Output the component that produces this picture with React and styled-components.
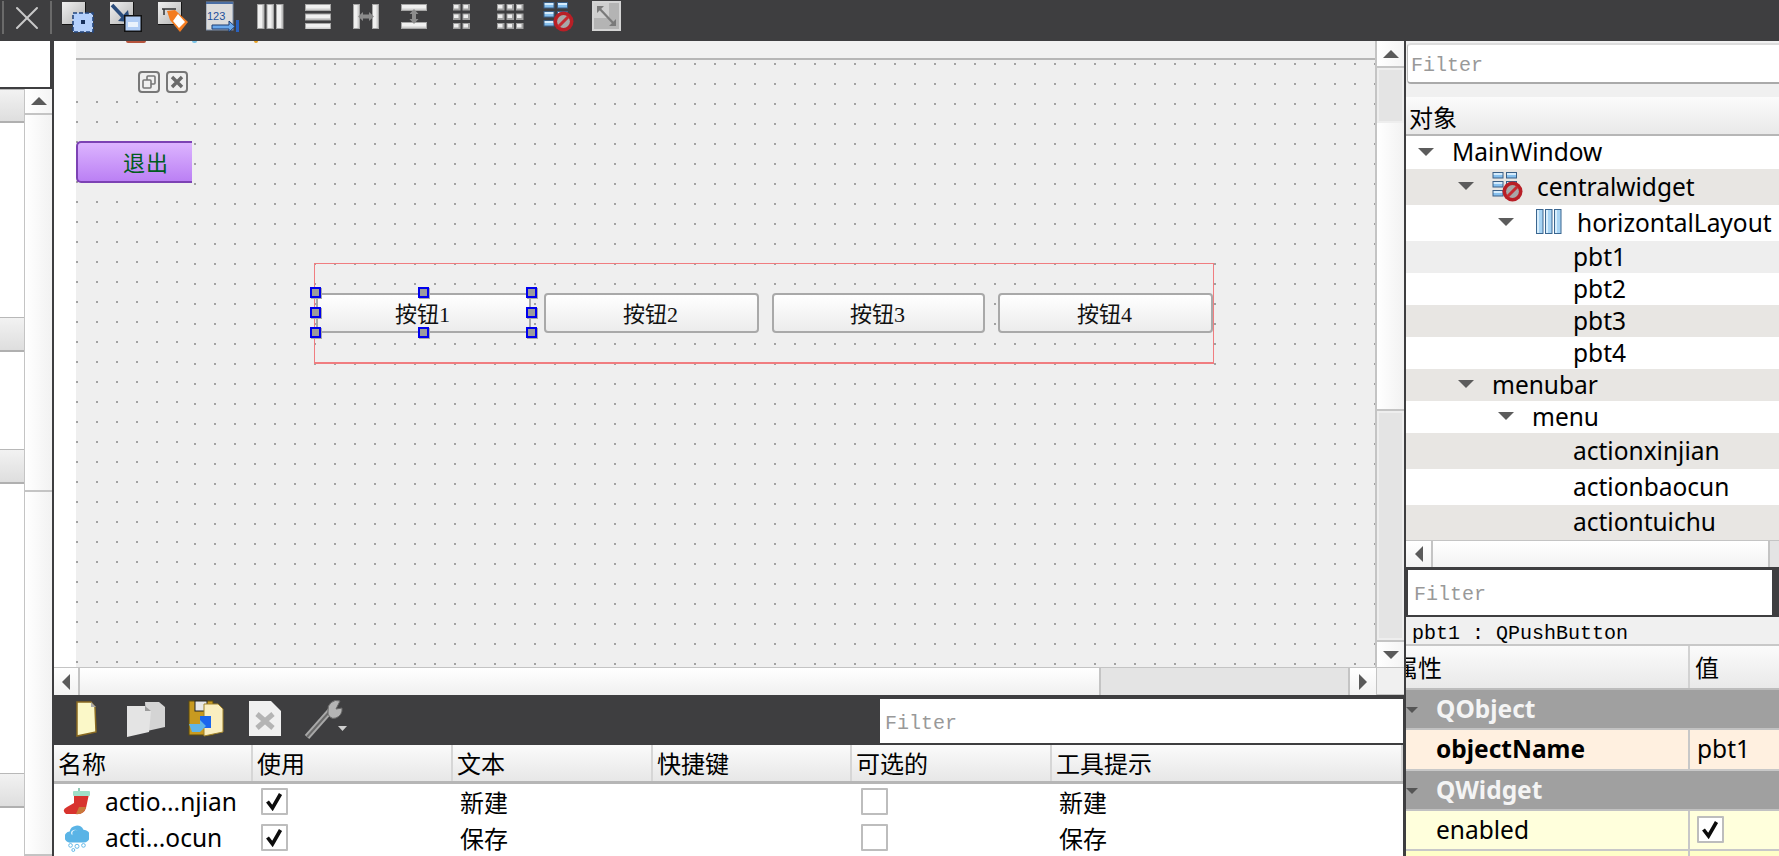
import React from "react";
import styled, { createGlobalStyle } from "styled-components";
import { X } from "lucide-react";

const sans = `"Noto Sans", "Open Sans", "Noto Sans CJK SC", sans-serif`;
const cjk = `"Noto Sans CJK SC", "Noto Sans", sans-serif`;
const serif = `"Liberation Serif", "Noto Sans CJK SC", serif`;
const mono = `"Liberation Mono", "Noto Sans CJK SC", monospace`;

const Global = createGlobalStyle`
  html, body { margin: 0; padding: 0; height: 100%; overflow: hidden; background: #3e3e40; }
  * { box-sizing: border-box; }
`;

const Screen = styled.div`
  width: 1779px;
  height: 856px;
  display: flex;
  flex-direction: column;
  overflow: hidden;
  background: #3e3e40;
  font-family: ${sans};
  color: #000;
`;

const TopBar = styled.div`
  height: 41px;
  flex: none;
  position: relative;
  display: flex;
  align-items: flex-start;
  background: #3e3e40;
`;
const TopIcon = styled.div`
  width: ${(p) => p.$w}px;
  height: 32px;
  margin-left: ${(p) => p.$ml}px;
  margin-top: 1px;
  flex: none;
  svg { display: block; }
`;
const Divider = styled.div`
  width: 2px;
  height: 33px;
  margin: 1px 0 0 ${(p) => p.$ml}px;
  background: #6a6a6a;
  flex: none;
`;
const CloseBtn = styled.div`
  width: 40px;
  height: 40px;
  margin: -2px 0 0 3px;
  flex: none;
  color: #c9c9c9;
  svg { display: block; }
`;

const Body = styled.div`
  flex: 1;
  display: flex;
  min-height: 0;
`;

/* left dock */
const LeftDock = styled.div`
  width: 52px;
  flex: none;
  display: flex;
  flex-direction: column;
  background: #3e3e40;
`;
const LeftTop = styled.div`
  height: 46px;
  width: 50px;
  background: #fff;
  flex: none;
`;
const LeftList = styled.div`
  margin-top: 2px;
  flex: 1;
  display: flex;
  background: #fff;
`;
const ListCol = styled.div`
  width: 24px;
  display: flex;
  flex-direction: column;
  background: #fff;
`;
const ListHead = styled.div`
  height: ${(p) => p.$h}px;
  margin-top: ${(p) => p.$mt}px;
  flex: none;
  background: linear-gradient(#f2f2f2, #dedede);
  border-top: 1px solid #b8b8b8;
  border-bottom: 2px solid #b0b0b0;
`;
const VBar = styled.div`
  width: 28px;
  flex: none;
  display: flex;
  flex-direction: column;
  border-left: 1px solid #c4c4c4;
  background: #e4e4e4;
`;
const ArrowCell = styled.div`
  height: ${(p) => p.$h || 26}px;
  flex: none;
  display: flex;
  align-items: center;
  justify-content: center;
  background: linear-gradient(90deg, #fff, #f4f4f4);
  ${(p) => (p.$top ? "border-bottom: 2px solid #c4c4c4;" : "border-top: 2px solid #c4c4c4;")}
`;
const Tri = styled.div`
  width: 0;
  height: 0;
  border-style: solid;
  border-color: transparent;
  ${(p) =>
    p.$dir === "up"
      ? `border-width: 0 8px 8px 8px; border-bottom-color: #5a5a5a;`
      : p.$dir === "down"
      ? `border-width: 8px 8px 0 8px; border-top-color: #5a5a5a;`
      : p.$dir === "left"
      ? `border-width: 8px 8px 8px 0; border-right-color: #5a5a5a;`
      : `border-width: 8px 0 8px 8px; border-left-color: #5a5a5a;`}
`;
const Track = styled.div`
  height: ${(p) => p.$h}px;
  flex: ${(p) => (p.$h ? "none" : 1)};
  background: ${(p) => (p.$thumb ? "#e4e4e4" : "linear-gradient(90deg, #fff, #f2f2f2)")};
  ${(p) => (p.$thumb ? "border: 2px solid #eee;" : "border-bottom: 2px solid #c4c4c4;")}
`;

/* centre */
const Centre = styled.div`
  width: 1352px;
  margin-left: 2px;
  flex: none;
  display: flex;
  flex-direction: column;
`;
const DesignRow = styled.div`
  height: 626px;
  flex: none;
  display: flex;
`;
const Gutter = styled.div`
  width: 22px;
  flex: none;
  background: #fff;
`;
const Form = styled.div`
  width: 1300px;
  flex: none;
  position: relative;
  display: flex;
  flex-direction: column;
  background: #efefef;
  border-right: 1px solid #c4c4c4;
  overflow: hidden;
`;
const MenuStrip = styled.div`
  height: 19px;
  flex: none;
  position: relative;
  background: #f1f1f1;
  border-bottom: 2px solid #b6b6b6;
`;
const MenuScrap = styled.div`
  position: absolute;
  top: 0;
  left: ${(p) => p.$x}px;
  width: ${(p) => p.$w}px;
  height: 2px;
  background: ${(p) => p.$c};
  border-radius: 0 0 4px 4px;
`;
const FormBody = styled.div`
  flex: 1;
  display: flex;
  min-height: 0;
`;
const FormLeft = styled.div`
  width: 118px;
  flex: none;
  display: flex;
  flex-direction: column;
`;
const TitleBtns = styled.div`
  height: 40px;
  flex: none;
  display: flex;
  gap: 6px;
  justify-content: flex-end;
  align-items: flex-start;
  padding: 11px 6px 0 0;
  svg { display: block; }
`;
const dots = (x, y) => `
  background-image: conic-gradient(from 270deg at 2px 2px, #a2a2a2 25%, transparent 0);
  background-size: 20px 20px;
  background-position: ${x}px ${y}px;
`;
const LeftDots = styled.div`
  flex: 1;
  ${dots(0, 1)}
  padding-top: 41px;
`;
const RightDots = styled.div`
  flex: 1;
  ${dots(0, 3)}
`;
const QuitButton = styled.div`
  width: 116px;
  height: 42px;
  display: flex;
  align-items: center;
  padding: 0 0 3px 45px;
  font-family: ${cjk};
  font-size: 22px;
  color: #005c20;
  letter-spacing: 1px;
  border: 2px solid #7c42b4;
  border-right: 0;
  border-radius: 5px 0 0 5px;
  background: linear-gradient(#dcb4ff, #bb80f4);
`;
const LayoutBox = styled.div`
  position: absolute;
  left: 238px;
  top: 222px;
  width: 900px;
  height: 101px;
  border: 1px solid #f07d80;
  border-bottom-width: 2px;
  display: flex;
  padding: 29px 0 0 1px;
  gap: 13px;
`;
const PushButton = styled.div`
  position: relative;
  width: ${(p) => p.$w}px;
  height: 40px;
  display: flex;
  align-items: center;
  justify-content: center;
  padding: 0 2px 3px 0;
  font-family: ${serif};
  font-size: 22px;
  color: #111;
  border: 2px solid #a9a9a9;
  border-radius: 4px;
  background: linear-gradient(#fff, #ececec);
`;
const Handle = styled.span`
  position: absolute;
  left: ${(p) => p.$x}px;
  top: ${(p) => p.$y}px;
  width: 11px;
  height: 11px;
  border: 2px solid #0000ee;
  background: #9c9c9c;
  box-shadow: 1px 1px 0 #a8a8a8;
`;
const HBar = styled.div`
  height: 28px;
  width: 1350px;
  flex: none;
  display: flex;
`;
const HArrow = styled.div`
  width: ${(p) => p.$w}px;
  flex: none;
  display: flex;
  align-items: center;
  justify-content: center;
  background: linear-gradient(#fff, #f2f2f2);
  border-top: 1px solid #c4c4c4;
  ${(p) => (p.$left ? "border-right: 2px solid #c4c4c4;" : "border-left: 2px solid #c4c4c4;")}
`;
const HTrack = styled.div`
  flex: ${(p) => (p.$w ? "none" : 1)};
  width: ${(p) => p.$w}px;
  background: ${(p) => (p.$thumb ? "#e4e4e4" : "linear-gradient(#fff, #f0f0f0)")};
  border-top: 1px solid #c4c4c4;
  ${(p) => (p.$thumb ? "border-left: 2px solid #c4c4c4;" : "")}
`;
const Corner = styled.div`
  width: 28px;
  flex: none;
  background: #f0f0f0;
  border: 1px solid #c4c4c4;
  border-right: 0;
`;

/* action editor */
const ActionBar = styled.div`
  height: 50px;
  width: 1349px;
  flex: none;
  display: flex;
  align-items: flex-start;
  background: #3e3e40;
  position: relative;
`;
const ActionIcon = styled.div`
  width: ${(p) => p.$w}px;
  margin: 4px 0 0 ${(p) => p.$ml}px;
  flex: none;
  svg { display: block; }
`;
const ActionFilter = styled.div`
  margin: 4px 0 0 auto;
  width: 523px;
  height: 44px;
  background: #fff;
  font-family: ${mono};
  font-size: 20px;
  color: #999;
  padding: 13px 0 0 5px;
  line-height: 24px;
`;
const ActionTable = styled.div`
  flex: 1;
  width: 1349px;
  background: #fff;
  display: flex;
  flex-direction: column;
`;
const TableHead = styled.div`
  height: 39px;
  flex: none;
  display: grid;
  grid-template-columns: 199px 200px 200px 199px 200px 1fr;
  background: linear-gradient(#fbfbfb, #e7e7e7);
  border-bottom: 3px solid #b6b6b6;
`;
const HeadCell = styled.div`
  display: flex;
  align-items: center;
  padding-left: 4px;
  font-family: ${cjk};
  font-size: 24px;
  line-height: 1;
  border-right: 2px solid #d6d6d6;
  white-space: nowrap;
`;
const TableRow = styled.div`
  height: 36px;
  flex: none;
  display: grid;
  grid-template-columns: 199px 200px 200px 199px 200px 1fr;
`;
const TableCell = styled.div`
  display: flex;
  align-items: center;
  padding: 0 0 1px ${(p) => (p.$pad === undefined ? 7 : p.$pad)}px;
  font-size: ${(p) => (p.$cjk ? 24 : 24.5)}px;
  font-family: ${(p) => (p.$cjk ? cjk : sans)};
  white-space: nowrap;
  svg { display: block; flex: none; }
`;
const ActionIconSlot = styled.span`
  width: 28px;
  height: 30px;
  margin-right: 14px;
  flex: none;
  display: flex;
  align-items: center;
  justify-content: center;
`;
const Check = styled.span`
  width: 27px;
  height: 27px;
  flex: none;
  display: flex;
  align-items: center;
  justify-content: center;
  background: #fff;
  border: 2px solid #bdbdbd;
  border-radius: 1px;
  svg { display: block; }
`;

/* right docks */
const RightDock = styled.div`
  flex: 1;
  display: flex;
  flex-direction: column;
  min-width: 0;
`;
const ObjectFilterWrap = styled.div`
  height: 56px;
  flex: none;
  padding: 2px 0 13px 1px;
  background: #f0f0f0;
`;
const ObjectFilter = styled.div`
  height: 41px;
  background: #fff;
  border: 2px solid #dcdcdc;
  border-bottom: 2px solid #aaa;
  border-left: 1px solid #bbb;
  border-right: 0;
  border-radius: 4px 0 0 4px;
  font-family: ${mono};
  font-size: 20px;
  line-height: 24px;
  color: #999;
  padding: 9px 0 0 3px;
`;
const TreeHead = styled.div`
  height: 39px;
  flex: none;
  display: flex;
  align-items: center;
  padding: 2px 0 0 3px;
  font-family: ${cjk};
  font-size: 24px;
  background: linear-gradient(#fbfbfb, #e9e9e9);
  border-bottom: 2px solid #b6b6b6;
`;
const TreeBody = styled.div`
  height: 404px;
  flex: none;
  display: flex;
  flex-direction: column;
  background: #fff;
`;
const TreeRow = styled.div`
  height: ${(p) => p.$h}px;
  flex: none;
  display: flex;
  align-items: center;
  padding: 0 0 2px ${(p) => p.$indent}px;
  font-size: 24.5px;
  background: ${(p) => p.$bg || "#fff"};
  white-space: nowrap;
  overflow: hidden;
  svg { display: block; flex: none; }
`;
const Caret = styled.span`
  width: 0;
  height: 0;
  margin-right: 18px;
  flex: none;
  border-style: solid;
  border-color: #5c5c5c transparent transparent transparent;
  border-width: 8px 8px 0 8px;
`;
const RowIcon = styled.span`
  margin: 0 ${(p) => p.$mr}px 0 ${(p) => p.$ml || 0}px;
  flex: none;
`;
const TreeScroll = styled.div`
  height: 27px;
  flex: none;
  display: flex;
  background: linear-gradient(#fff, #f2f2f2);
  border-top: 1px solid #c4c4c4;
`;
const TreeScrollLeft = styled.div`
  width: 27px;
  flex: none;
  display: flex;
  align-items: center;
  justify-content: center;
  border-right: 2px solid #c4c4c4;
`;
const TreeScrollThumb = styled.div`
  margin-left: auto;
  width: 11px;
  background: #e4e4e4;
  border-left: 2px solid #c4c4c4;
`;
const PropFilterWrap = styled.div`
  height: 50px;
  flex: none;
  padding: 3px 7px 2px 2px;
  background: #3e3e40;
`;
const PropFilter = styled.div`
  height: 100%;
  background: #fff;
  font-family: ${mono};
  font-size: 20px;
  line-height: 24px;
  color: #999;
  padding: 13px 0 0 6px;
`;
const ClassLine = styled.div`
  height: 29px;
  flex: none;
  background: #f0f0f0;
  border-bottom: 2px solid #c8c8c8;
  font-family: ${mono};
  font-size: 20px;
  line-height: 33px;
  padding-left: 6px;
  white-space: nowrap;
  overflow: hidden;
`;
const PropHead = styled.div`
  height: 44px;
  flex: none;
  display: grid;
  grid-template-columns: 284px 1fr;
  background: linear-gradient(#fbfbfb, #e9e9e9);
  border-bottom: 2px solid #bcbcbc;
  overflow: hidden;
`;
const PropHeadCell = styled.div`
  font-family: ${cjk};
  font-size: 24px;
  line-height: 42px;
  overflow: hidden;
  white-space: nowrap;
  text-indent: ${(p) => p.$indent}px;
  border-right: ${(p) => (p.$last ? "0" : "2px solid #d2d2d2")};
`;
const GroupRow = styled.div`
  height: ${(p) => p.$h}px;
  flex: none;
  display: flex;
  align-items: center;
  background: #a0a0a0;
  border-bottom: 2px solid #c2c2c2;
  color: #f4f4f4;
  font-size: 24.5px;
  font-weight: 700;
  position: relative;
  padding: 0 0 2px 30px;
`;
const GroupCaret = styled.span`
  position: absolute;
  left: 0;
  top: 17px;
  width: 0;
  height: 0;
  border-style: solid;
  border-color: #555 transparent transparent transparent;
  border-width: 6px 6px 0 6px;
`;
const PropRow = styled.div`
  height: ${(p) => p.$h}px;
  flex: none;
  display: grid;
  grid-template-columns: 284px 1fr;
  background: ${(p) => p.$bg};
  border-bottom: 2px solid #c8c8c8;
  font-size: 24.5px;
`;
const PropName = styled.div`
  display: flex;
  align-items: center;
  padding: 0 0 2px 30px;
  border-right: 2px solid #c8c8c8;
  font-weight: ${(p) => (p.$bold ? 700 : 400)};
`;
const PropValue = styled.div`
  display: flex;
  align-items: center;
  padding: 0 0 2px 7px;
`;

const tick = (
  <svg width="19" height="19" viewBox="0 0 19 19">
    <path d="M2.5 9.5 L7.5 16 L15.5 2" fill="none" stroke="#0c0c0c" strokeWidth="3.6" />
  </svg>
);

const BevelV = ({ x, y, w, h }) => (
  <g>
    <rect x={x} y={y} width={w} height={h} fill="#a6a6a6" />
    <rect x={x + 1} y={y + 1} width={w - 3} height={h - 2} fill="#f0f0f0" />
    <rect x={x + w - 2.5} y={y + 1} width={1.5} height={h - 2} fill="#d0d0d0" />
  </g>
);
const BevelH = ({ x, y, w, h }) => (
  <g>
    <rect x={x} y={y} width={w} height={h} fill="#a6a6a6" />
    <rect x={x + 1} y={y + 1} width={w - 2} height={h - 3} fill="#f0f0f0" />
    <rect x={x + 1} y={y + h - 2.5} width={w - 2} height={1.5} fill="#d0d0d0" />
  </g>
);
const BarsV = () => (
  <svg width="27" height="28" viewBox="0 0 27 28">
    {[0, 9.5, 19].map((x) => (
      <BevelV key={x} x={x} y={3} w={7.5} h={25} />
    ))}
  </svg>
);
const BarsH = () => (
  <svg width="27" height="28" viewBox="0 0 27 28">
    {[3, 12.5, 22].map((y) => (
      <BevelH key={y} x={0} y={y} w={26} h={7} />
    ))}
  </svg>
);
const SplitH = () => (
  <svg width="27" height="28" viewBox="0 0 27 28">
    <BevelV x={0} y={3} w={7} h={25} />
    <BevelV x={19} y={3} w={7} h={25} />
    <path d="M5 15.5 L10 11 V13.5 H16 V11 L21 15.5 L16 20 V17.5 H10 V20 Z" fill="#8c8c8c" />
  </svg>
);
const SplitV = () => (
  <svg width="27" height="28" viewBox="0 0 27 28">
    <BevelH x={0} y={3} w={26} h={7} />
    <BevelH x={0} y={21} w={26} h={7} />
    <path d="M13 8 L17.5 13 H15 V18 H17.5 L13 23 L8.5 18 H11 V13 H8.5 Z" fill="#8c8c8c" />
  </svg>
);
const Grid = ({ cols, width }) => (
  <svg width={width} height="28" viewBox={`0 0 ${width} 28`}>
    {[3, 12.5, 22].map((y) =>
      Array.from({ length: cols }).map((_, i) => (
        <g key={`${y}-${i}`}>
          <rect x={i * 9.5} y={y} width="7.5" height="6.5" fill="#a0a0a0" />
          <rect x={i * 9.5 + 1} y={y + 1} width="4.5" height="3.5" fill="#eeeeee" />
        </g>
      ))
    )}
  </svg>
);
const NoLayout = () => (
  <svg width="31" height="31" viewBox="0 0 31 31">
    {[1, 10, 19].map((y) => (
      <g key={y}>
        <rect x="0.5" y={y} width="11" height="6.5" fill="#3a5f86" />
        <rect x="1.5" y={y + 1} width="9" height="2" fill="#d6ecfc" />
        <rect x="1.5" y={y + 3} width="9" height="2.5" fill="#86c0ee" />
        {y < 19 && (
          <g>
            <rect x="14" y={y} width="11" height="6.5" fill="#3a5f86" />
            <rect x="15" y={y + 1} width="9" height="2" fill="#d6ecfc" />
            <rect x="15" y={y + 3} width="9" height="2.5" fill="#86c0ee" />
          </g>
        )}
      </g>
    ))}
    <circle cx="20.5" cy="20.5" r="10" fill="#b81f26" />
    <circle cx="20.5" cy="20.5" r="6.4" fill="#a8a8a8" />
    <path d="M15.5 25.5 L25.5 15.5" stroke="#c62a30" strokeWidth="3" />
  </svg>
);
const HLayout = () => (
  <svg width="28" height="30" viewBox="0 0 28 30">
    {[1, 10, 19].map((x) => (
      <g key={x}>
        <rect x={x} y="2" width="7.5" height="25" fill="#3a6690" />
        <rect x={x + 1} y="3" width="5.5" height="23" fill="#a8d4f4" />
        <rect x={x + 1} y="3" width="2" height="23" fill="#d8eefc" />
      </g>
    ))}
  </svg>
);

const EditWidgets = () => (
  <svg width="33" height="32" viewBox="0 0 33 32">
    <defs>
      <linearGradient id="winA" x1="0" y1="0" x2="1" y2="1">
        <stop offset="0" stopColor="#f0f0f0" />
        <stop offset="1" stopColor="#b4b4b4" />
      </linearGradient>
    </defs>
    <rect x="0" y="1" width="24" height="23" fill="#151515" />
    <rect x="0" y="1" width="23" height="22" fill="url(#winA)" />
    <rect x="11" y="12" width="20" height="19" fill="#b4d0fc" stroke="#23457c" strokeWidth="1.6" strokeDasharray="4 2" />
    <rect x="19" y="19" width="4" height="4" fill="#16305c" />
  </svg>
);
const EditSignals = () => (
  <svg width="33" height="32" viewBox="0 0 33 32">
    <rect x="0" y="1" width="24" height="23" fill="#151515" />
    <rect x="0" y="1" width="23" height="22" fill="url(#winA)" />
    <path d="M2 4 L16 19" stroke="#2a4c7c" strokeWidth="3.6" />
    <path d="M8 20 L20 21 L18 9 Z" fill="#2a4c7c" />
    <rect x="14" y="14" width="18" height="17" fill="#111" />
    <rect x="15.5" y="15.5" width="15" height="14" fill="#b0ccf4" />
    <rect x="18" y="21" width="10" height="5" fill="#eaf2fc" />
  </svg>
);
const EditBuddy = () => (
  <svg width="31" height="32" viewBox="0 0 31 32">
    <rect x="0" y="1" width="24" height="23" fill="#151515" />
    <rect x="0" y="1" width="23" height="22" fill="url(#winA)" />
    <path d="M4 8 H18 M6 8 V14" stroke="#333" strokeWidth="1.5" />
    <path d="M9 10 L17 9 L30 21 L22 31 L12 19 Z" fill="#f47c20" />
    <path d="M20 13 L27 21 L21 27 L15 20 Z" fill="#fff" />
  </svg>
);
const EditTab = () => (
  <svg width="33" height="32" viewBox="0 0 33 32">
    <rect x="0" y="1" width="27" height="28" fill="#dcdcdc" stroke="#7c8ea8" />
    <rect x="0" y="1" width="27" height="2" fill="#4a6ea4" />
    <text x="1" y="19" fontFamily="Liberation Sans, sans-serif" fontSize="11" fill="#1d4f9a">123</text>
    <path d="M6 24 H23 V20 L29 25.5 L23 31 V28 H6 Z" fill="#6aa8ec" stroke="#1d3c72" />
    <rect x="30" y="19" width="3" height="12" fill="#2a62c0" />
  </svg>
);
const AdjustSize = () => (
  <svg width="29" height="30" viewBox="0 0 29 30">
    <rect x="1" y="1" width="27" height="28" fill="#b4b4b4" stroke="#d4d4d4" strokeWidth="2" />
    <rect x="2" y="2" width="15" height="15" fill="#cfcfcf" />
    <path d="M6 6 L23 24" stroke="#7a7a7a" strokeWidth="2.2" />
    <path d="M5 5 H12 L5 12 Z M24 25 H17 L24 18 Z" fill="#7a7a7a" />
  </svg>
);
const Restore = () => (
  <svg width="22" height="22" viewBox="0 0 22 22">
    <rect x="1" y="1" width="20" height="20" rx="3" fill="none" stroke="#777" strokeWidth="2" />
    <rect x="9" y="5" width="8" height="8" rx="1" fill="none" stroke="#777" strokeWidth="1.6" />
    <rect x="5" y="9" width="8" height="8" rx="1" fill="#efefef" stroke="#777" strokeWidth="1.6" />
  </svg>
);
const CloseSmall = () => (
  <svg width="22" height="22" viewBox="0 0 22 22">
    <rect x="1" y="1" width="20" height="20" rx="3" fill="none" stroke="#777" strokeWidth="2" />
    <path d="M6 6 L16 16 M16 6 L6 16" stroke="#6a6a6a" strokeWidth="3.4" />
  </svg>
);

const FileNew = () => (
  <svg width="24" height="38" viewBox="0 0 24 38">
    <path d="M3 3 H17 L21 8 L22 33 L3 37 Z" fill="#fbf8c8" stroke="#8a6a20" strokeWidth="1.5" />
    <path d="M17 3 V8 H22 Z" fill="#aaa" />
  </svg>
);
const FileCopy = () => (
  <svg width="42" height="38" viewBox="0 0 42 38">
    <path d="M20 3 H34 L40 8 V28 L22 32 Z" fill="#d4d4d4" />
    <path d="M2 7 H20 L26 12 L24 33 L2 38 Z" fill="#e4e4e4" />
    <path d="M20 7 V12 H26 Z" fill="#9a9a9a" />
  </svg>
);
const FilePaste = () => (
  <svg width="36" height="38" viewBox="0 0 36 38">
    <rect x="1" y="2" width="24" height="34" fill="#c89a20" stroke="#5a4a10" />
    <rect x="7" y="2" width="12" height="10" fill="#e8e8e8" stroke="#222" />
    <path d="M16 5 H30 L35 10 V33 L16 37 Z" fill="#faeec0" stroke="#a0822a" />
    <rect x="12" y="17" width="11" height="12" fill="#1a66ee" />
    <path d="M1 25 H12 V21 L18 27 L12 33 H4 Z" fill="#5fb4e8" />
  </svg>
);
const FileDelete = () => (
  <svg width="32" height="38" viewBox="0 0 32 38">
    <path d="M0 2 H22 L32 12 V37 H0 Z" fill="#f0f0f0" />
    <path d="M8 15 L24 29 M24 15 L8 29" stroke="#b4b4b4" strokeWidth="5" />
  </svg>
);
const Wrench = () => (
  <svg width="44" height="40" viewBox="0 0 44 40">
    <path d="M3 38 L26 12" stroke="#a8a8a8" strokeWidth="6" />
    <path d="M3 38 L26 12" stroke="#6a6a6a" strokeWidth="2" />
    <path d="M36 2 A9 9 0 0 0 24 12 A6 6 0 0 0 32 19 A9 9 0 0 0 38 9 L32 10 Z" fill="#b4b4b4" stroke="#666" />
    <path d="M34 27 H43 L38.5 32 Z" fill="#cfcfcf" />
  </svg>
);
const Sock = () => (
  <svg width="28" height="28" viewBox="0 0 28 28">
    <path d="M11 6 H26 L23 20 Q21 27 12 26 L3 26 Q-2 22 4 19 L11 15 Z" fill="#d8332e" />
    <rect x="10" y="3" width="17" height="5" rx="1" fill="#9fe0c8" />
    <path d="M13 26 Q21 27 23 19 L16 19 Z" fill="#c87a3a" />
    <path d="M16 3 V0" stroke="#6fb8a0" strokeWidth="1.5" />
  </svg>
);
const Cloud = () => (
  <svg width="24" height="30" viewBox="0 0 26 30">
    <path d="M6 20 A6 6 0 0 1 5 8 A8 8 0 0 1 20 6 A7 7 0 0 1 20 20 Z" fill="#5ab4e6" />
    <path d="M8 9 A4 4 0 0 1 14 7 A4 3 0 0 0 8 12 Z" fill="#e4f4fc" />
    <circle cx="6" cy="23" r="2" fill="#fff" stroke="#5ab4e6" />
    <circle cx="13" cy="24" r="2.2" fill="#fff" stroke="#5ab4e6" />
    <circle cx="20" cy="23" r="2" fill="#fff" stroke="#5ab4e6" />
    <circle cx="9" cy="28" r="1.6" fill="#fff" stroke="#5ab4e6" />
  </svg>
);

const handles = [
  [-8, -8], [100, -8], [208, -8],
  [-8, 12], [208, 12],
  [-8, 32], [100, 32], [208, 32],
];

const App = () => (
  <Screen>
    <Global />
    <TopBar>
      <Divider $ml={2} />
      <CloseBtn><X size={40} strokeWidth={1.2} /></CloseBtn>
      <Divider $ml={3} />
      <TopIcon $w={33} $ml={10}><EditWidgets /></TopIcon>
      <TopIcon $w={33} $ml={15}><EditSignals /></TopIcon>
      <TopIcon $w={31} $ml={15}><EditBuddy /></TopIcon>
      <TopIcon $w={33} $ml={17}><EditTab /></TopIcon>
      <TopIcon $w={27} $ml={18}><BarsV /></TopIcon>
      <TopIcon $w={27} $ml={21}><BarsH /></TopIcon>
      <TopIcon $w={27} $ml={21}><SplitH /></TopIcon>
      <TopIcon $w={27} $ml={21}><SplitV /></TopIcon>
      <TopIcon $w={17} $ml={25}><Grid cols={2} width={17} /></TopIcon>
      <TopIcon $w={27} $ml={27}><Grid cols={3} width={27} /></TopIcon>
      <TopIcon $w={31} $ml={19}><NoLayout /></TopIcon>
      <TopIcon $w={29} $ml={18}><AdjustSize /></TopIcon>
    </TopBar>
    <Body>
      <LeftDock>
        <LeftTop />
        <LeftList>
          <ListCol>
            <ListHead $h={34} $mt={0} />
            <ListHead $h={35} $mt={194} />
            <ListHead $h={35} $mt={97} />
            <ListHead $h={35} $mt={289} />
          </ListCol>
          <VBar>
            <ArrowCell $top><Tri $dir="up" /></ArrowCell>
            <Track $h={377} />
            <Track />
          </VBar>
        </LeftList>
      </LeftDock>
      <Centre>
        <DesignRow>
          <Gutter />
          <Form>
            <MenuStrip>
              <MenuScrap $x={50} $w={20} $c="#b5533c" />
              <MenuScrap $x={116} $w={5} $c="#79c4e8" />
              <MenuScrap $x={178} $w={4} $c="#e8a020" />
            </MenuStrip>
            <FormBody>
              <FormLeft>
                <TitleBtns>
                  <Restore />
                  <CloseSmall />
                </TitleBtns>
                <LeftDots>
                  <QuitButton>退出</QuitButton>
                </LeftDots>
              </FormLeft>
              <RightDots />
            </FormBody>
            <LayoutBox>
              <PushButton $w={215}>
                按钮1
                {handles.map(([x, y]) => (
                  <Handle key={`${x}-${y}`} $x={x} $y={y} />
                ))}
              </PushButton>
              <PushButton $w={215}>按钮2</PushButton>
              <PushButton $w={213}>按钮3</PushButton>
              <PushButton $w={215}>按钮4</PushButton>
            </LayoutBox>
          </Form>
          <VBar>
            <ArrowCell $top $h={27}><Tri $dir="up" /></ArrowCell>
            <Track $h={55} $thumb />
            <Track $h={288} />
            <Track $thumb />
            <ArrowCell $h={27}><Tri $dir="down" /></ArrowCell>
          </VBar>
        </DesignRow>
        <HBar>
          <HArrow $w={26} $left><Tri $dir="left" /></HArrow>
          <HTrack />
          <HTrack $w={249} $thumb />
          <HArrow $w={28}><Tri $dir="right" /></HArrow>
          <Corner />
        </HBar>
        <ActionBar>
          <ActionIcon $w={24} $ml={20}><FileNew /></ActionIcon>
          <ActionIcon $w={42} $ml={27}><FileCopy /></ActionIcon>
          <ActionIcon $w={36} $ml={21}><FilePaste /></ActionIcon>
          <ActionIcon $w={32} $ml={25}><FileDelete /></ActionIcon>
          <ActionIcon $w={44} $ml={23}><Wrench /></ActionIcon>
          <ActionFilter>Filter</ActionFilter>
        </ActionBar>
        <ActionTable>
          <TableHead>
            {["名称", "使用", "文本", "快捷键", "可选的", "工具提示"].map((t) => (
              <HeadCell key={t}>{t}</HeadCell>
            ))}
          </TableHead>
          <TableRow>
            <TableCell $pad={9}>
              <ActionIconSlot><Sock /></ActionIconSlot>
              actio...njian
            </TableCell>
            <TableCell $pad={8}><Check>{tick}</Check></TableCell>
            <TableCell $cjk>新建</TableCell>
            <TableCell />
            <TableCell $pad={9}><Check /></TableCell>
            <TableCell $cjk>新建</TableCell>
          </TableRow>
          <TableRow>
            <TableCell $pad={9}>
              <ActionIconSlot><Cloud /></ActionIconSlot>
              acti...ocun
            </TableCell>
            <TableCell $pad={8}><Check>{tick}</Check></TableCell>
            <TableCell $cjk>保存</TableCell>
            <TableCell />
            <TableCell $pad={9}><Check /></TableCell>
            <TableCell $cjk>保存</TableCell>
          </TableRow>
        </ActionTable>
      </Centre>
      <RightDock>
        <ObjectFilterWrap>
          <ObjectFilter>Filter</ObjectFilter>
        </ObjectFilterWrap>
        <TreeHead>对象</TreeHead>
        <TreeBody>
          <TreeRow $h={33} $indent={12}><Caret />MainWindow</TreeRow>
          <TreeRow $h={36} $indent={52} $bg="#e8e6e3">
            <Caret />
            <RowIcon $mr={14}><NoLayout /></RowIcon>
            centralwidget
          </TreeRow>
          <TreeRow $h={36} $indent={92}>
            <Caret />
            <RowIcon $ml={3} $mr={14}><HLayout /></RowIcon>
            horizontalLayout
          </TreeRow>
          <TreeRow $h={32} $indent={167} $bg="#eeeeee">pbt1</TreeRow>
          <TreeRow $h={32} $indent={167}>pbt2</TreeRow>
          <TreeRow $h={32} $indent={167} $bg="#e8e6e3">pbt3</TreeRow>
          <TreeRow $h={32} $indent={167}>pbt4</TreeRow>
          <TreeRow $h={32} $indent={52} $bg="#e8e6e3"><Caret />menubar</TreeRow>
          <TreeRow $h={32} $indent={92}><Caret />menu</TreeRow>
          <TreeRow $h={36} $indent={167} $bg="#e8e6e3">actionxinjian</TreeRow>
          <TreeRow $h={36} $indent={167}>actionbaocun</TreeRow>
          <TreeRow $h={35} $indent={167} $bg="#e8e6e3">actiontuichu</TreeRow>
        </TreeBody>
        <TreeScroll>
          <TreeScrollLeft><Tri $dir="left" /></TreeScrollLeft>
          <TreeScrollThumb />
        </TreeScroll>
        <PropFilterWrap>
          <PropFilter>Filter</PropFilter>
        </PropFilterWrap>
        <ClassLine>pbt1 : QPushButton</ClassLine>
        <PropHead>
          <PropHeadCell $indent={-12}>属性</PropHeadCell>
          <PropHeadCell $indent={5} $last>值</PropHeadCell>
        </PropHead>
        <GroupRow $h={40}><GroupCaret />QObject</GroupRow>
        <PropRow $h={41} $bg="#fff0e0">
          <PropName $bold>objectName</PropName>
          <PropValue>pbt1</PropValue>
        </PropRow>
        <GroupRow $h={40}><GroupCaret />QWidget</GroupRow>
        <PropRow $h={40} $bg="#ffffdc">
          <PropName>enabled</PropName>
          <PropValue><Check>{tick}</Check></PropValue>
        </PropRow>
        <PropRow $h={20} $bg="#ffffc8">
          <PropName />
          <PropValue />
        </PropRow>
      </RightDock>
    </Body>
  </Screen>
);

export default App;
